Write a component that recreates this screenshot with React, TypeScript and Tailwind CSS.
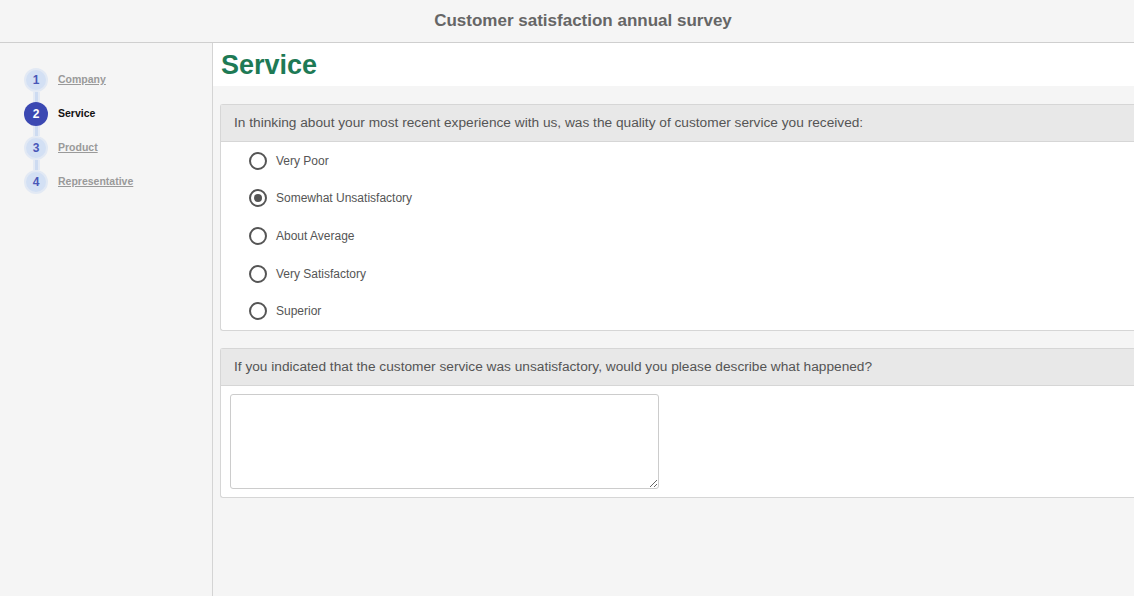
const options = [
  'Very Poor',
  'Somewhat Unsatisfactory',
  'About Average',
  'Very Satisfactory',
  'Superior',
];

const steps = ['Company', 'Service', 'Product', 'Representative'];

function Step({ n, label, active }: { n: number; label: string; active: boolean }) {
  return (
    <div className="flex h-[24px] items-center">
      <div className="flex w-[24px] justify-center">
        {active ? (
          <div className="flex h-[24px] w-[24px] items-center justify-center rounded-full bg-[#3b48b2] text-[12px] font-bold text-white">
            {n}
          </div>
        ) : (
          <div className="flex h-[24px] w-[24px] items-center justify-center rounded-full border-[2px] border-[#e2e9f4] bg-[#d3e0f4] text-[12px] font-bold text-[#4957b8]">
            {n}
          </div>
        )}
      </div>
      <span
        className={
          active
            ? 'ml-[10px] text-[10.5px] font-bold text-[#111]'
            : 'ml-[10px] text-[10.5px] font-bold text-[#9a9a9a] underline'
        }
      >
        {label}
      </span>
    </div>
  );
}

function Connector() {
  return (
    <div className="flex w-[24px] justify-center">
      <div className="h-[10px] w-[7px] border-x-[2px] border-[#e4eaf4] bg-[#cddbf1]" />
    </div>
  );
}

export default function App() {
  return (
    <div className="flex h-[596px] w-[1134px] flex-col overflow-hidden bg-[#f5f5f5] font-['Liberation_Sans',Arial,sans-serif]">
      <header className="flex h-[43px] shrink-0 items-center justify-center border-b border-[#cfcfcf] bg-[#f5f5f5] pl-[32px] shadow-[0_1px_2px_rgba(0,0,0,0.08)]">
        <h1 className="text-[17px] font-bold text-[#666]">Customer satisfaction annual survey</h1>
      </header>

      <div className="flex flex-1 overflow-hidden">
        <aside className="w-[213px] shrink-0 border-r border-[#d4d4d4] bg-[#f5f5f5] pt-[25px] pl-[24px]">
          {steps.map((s, i) => (
            <div key={s}>
              {i > 0 && <Connector />}
              <Step n={i + 1} label={s} active={i === 1} />
            </div>
          ))}
        </aside>

        <main className="flex-1 overflow-hidden">
          <div className="w-[1000px] bg-white pl-[8px] pt-[5px] pb-[4px]">
            <h2 className="text-[27px] font-bold leading-[34px] text-[#1e7a55]">Service</h2>
          </div>

          <div className="w-[1000px] pl-[7px] pt-[18px]">
            <section className="rounded-l-[3px] border border-r-0 border-[#d6d6d6] bg-white">
              <div className="flex h-[37px] items-center border-b border-[#d6d6d6] bg-[#e8e8e8] px-[13px] text-[13.7px] text-[#555]">
                In thinking about your most recent experience with us, was the quality of customer service you received:
              </div>
              <div className="pl-[28px]">
                {options.map((o, i) => (
                  <label key={o} className="flex h-[37.6px] items-center text-[12px] text-[#555]">
                    <span className="flex h-[18px] w-[18px] items-center justify-center rounded-full border-[2px] border-[#555] bg-white">
                      {i === 1 && <span className="h-[8px] w-[8px] rounded-full bg-[#555]" />}
                    </span>
                    <span className="ml-[9px]">{o}</span>
                  </label>
                ))}
              </div>
            </section>

            <section className="mt-[17px] rounded-l-[3px] border border-r-0 border-[#d6d6d6] bg-white">
              <div className="flex h-[37px] items-center border-b border-[#d6d6d6] bg-[#e8e8e8] px-[13px] text-[13.7px] text-[#555]">
                If you indicated that the customer service was unsatisfactory, would you please describe what happened?
              </div>
              <div className="px-[9px] pt-[8px] pb-[8px]">
                <textarea className="block h-[95px] w-[429px] rounded-[3px] border border-[#ccc] bg-white outline-none" />
              </div>
            </section>
          </div>
        </main>
      </div>
    </div>
  );
}
